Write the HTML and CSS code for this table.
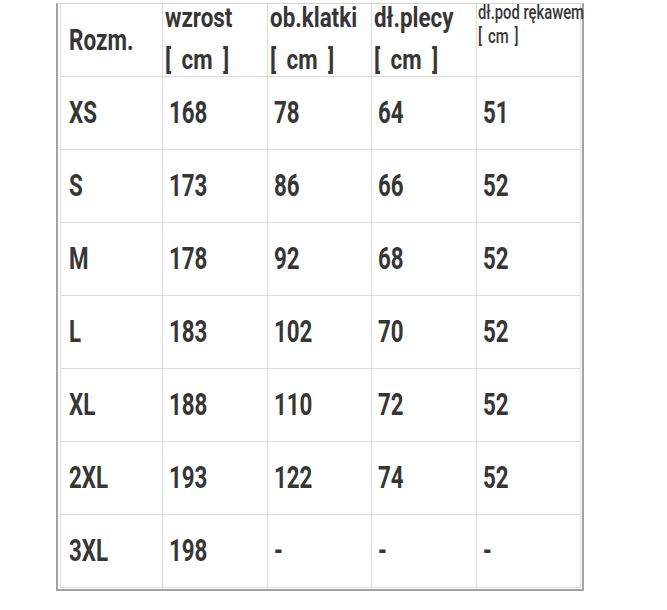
FILE: index.html
```html
<!DOCTYPE html>
<html lang="pl">
<head>
<meta charset="utf-8">
<title>Tabela rozmiarów</title>
<link rel="stylesheet" href="styles.css">
</head>
<body>
<table class="sizes">
  <colgroup>
    <col class="c1"><col class="cn"><col class="cn"><col class="cn"><col class="cn">
  </colgroup>
  <thead>
    <tr class="head">
      <th class="first"><span class="t">Rozm.</span></th>
      <th><span class="l1">wzrost</span><span class="l2">[ cm ]</span></th>
      <th><span class="l1">ob.klatki</span><span class="l2">[ cm ]</span></th>
      <th><span class="l1">dł.plecy</span><span class="l2">[ cm ]</span></th>
      <th class="small"><span class="s1">dł.pod rękawem</span><span class="s2">[ cm ]</span></th>
    </tr>
  </thead>
  <tbody>
    <tr><td><span class="t">XS</span></td><td><span class="t">168</span></td><td><span class="t">78</span></td><td><span class="t">64</span></td><td><span class="t">51</span></td></tr>
    <tr><td><span class="t">S</span></td><td><span class="t">173</span></td><td><span class="t">86</span></td><td><span class="t">66</span></td><td><span class="t">52</span></td></tr>
    <tr><td><span class="t">M</span></td><td><span class="t">178</span></td><td><span class="t">92</span></td><td><span class="t">68</span></td><td><span class="t">52</span></td></tr>
    <tr><td><span class="t">L</span></td><td><span class="t">183</span></td><td><span class="t">102</span></td><td><span class="t">70</span></td><td><span class="t">52</span></td></tr>
    <tr><td><span class="t">XL</span></td><td><span class="t">188</span></td><td><span class="t">110</span></td><td><span class="t">72</span></td><td><span class="t">52</span></td></tr>
    <tr><td><span class="t">2XL</span></td><td><span class="t">193</span></td><td><span class="t">122</span></td><td><span class="t">74</span></td><td><span class="t">52</span></td></tr>
    <tr><td><span class="t">3XL</span></td><td><span class="t">198</span></td><td><span class="t">-</span></td><td><span class="t">-</span></td><td><span class="t">-</span></td></tr>
  </tbody>
</table>
</body>
</html>
```
FILE: styles.css
```css
html, body {
  margin: 0;
  padding: 0;
  background: #ffffff;
}
body {
  padding: 3px 0 0 56px;
}
.sizes {
  table-layout: fixed;
  width: 528px;
  border-collapse: separate;
  border-spacing: 0;
  border: 2px solid #a3a3a3;
  border-top: 1px solid #d4d4d4;
  padding: 0 1px 1px 2px;
  font-family: Roboto, "Liberation Sans", sans-serif;
  font-weight: 700;
  color: #363636;
}
.c1 { width: 103px; }
.cn { width: 104px; }
.sizes th,
.sizes td {
  border-right: 1px solid #dcdcdc;
  border-bottom: 1px solid #dcdcdc;
  text-align: left;
  padding: 0;
  overflow: visible;
  white-space: nowrap;
}
.sizes tr > :first-child { border-left: 1px solid #dcdcdc; }

.t {
  display: inline-block;
  transform: scaleX(0.72);
  transform-origin: 0 50%;
}

.head th {
  height: 72px;
  vertical-align: top;
  font-size: 28px;
  padding-left: 2px;
}
.head th.first {
  vertical-align: middle;
  padding-left: 8px;
  font-size: 30px;
  line-height: 34px;
}
.head th.first .t { transform: scaleX(0.75); }

.l1, .l2, .s1, .s2 {
  display: block;
  transform-origin: 0 0;
}
.l1, .l2 { transform: scaleX(0.8); }
.l1 { line-height: 27px; }
.l2 { line-height: 30px; margin-top: 14px; word-spacing: 6px; }

.head th.small {
  font-size: 20px;
  font-weight: 500;
  padding-left: 1px;
}
.s1, .s2 { transform: scaleX(0.74); }
.s1 { line-height: 16px; }
.s2 { line-height: 24px; margin-top: 4px; word-spacing: 3px; }

.sizes td {
  height: 72px;
  font-size: 31px;
  line-height: 36px;
  padding-left: 6px;
  vertical-align: middle;
}
.sizes td:first-child { padding-left: 8px; }
```
